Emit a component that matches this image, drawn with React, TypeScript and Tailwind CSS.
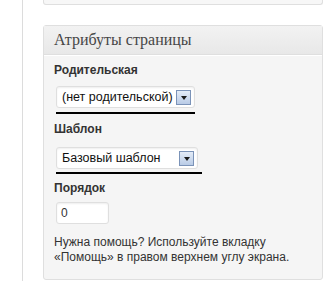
import React from "react";

const sans = "font-['Liberation_Sans',Arial,sans-serif]";

function Arrow() {
  return (
    <span className="flex h-[15px] w-[15px] shrink-0 items-center justify-center border border-[#7b93b8] bg-gradient-to-b from-[#e4ecf7] to-[#b9cbe6]">
      <span className="mt-[1px] h-0 w-0 border-x-[3px] border-t-[4px] border-x-transparent border-t-[#1a1a1a]" />
    </span>
  );
}

function FakeSelect({ label, width }: { label: string; width: string }) {
  return (
    <div className={`flex h-[22px] items-center justify-between gap-[2px] rounded-[3px] border border-[#dfdfdf] bg-white pl-[5px] pr-[3px] shadow-[inset_0_1px_2px_rgba(0,0,0,0.07)] ${width}`}>
      <span className="whitespace-nowrap text-[12.5px] leading-none text-[#111]">{label}</span>
      <Arrow />
    </div>
  );
}

export default function App() {
  return (
    <div className={`h-[281px] w-[333px] overflow-hidden bg-white ${sans}`}>
      <div className="ml-[22px] h-full border-l border-[#dcdcdc] pl-[20px]">
        {/* tail of the panel above */}
        <div className="h-[5px] w-[280px] rounded-b-[3px] border-x border-b border-[#dfdfdf] bg-[#f7f7f7]" />

        <div className="mt-[20px] w-[280px] rounded-[3px] border border-[#dfdfdf] bg-[#f5f5f5]">
          <div className="flex h-[29px] items-center border-b border-[#dfdfdf] bg-gradient-to-b from-[#f2f2f2] to-[#e8e8e8] pl-[10px] shadow-[0_1px_0_#fff]">
            <h3 className="whitespace-nowrap font-['Liberation_Serif',Georgia,serif] text-[16px] text-[#464646]">
              Атрибуты страницы
            </h3>
          </div>

          <div className="pb-[14px] pl-[10px] pt-[7px]">
            <p className="text-[12px] font-bold leading-[16px] text-[#333]">Родительская</p>
            <div className="ml-[2px] mt-[8px] w-fit">
              <FakeSelect label="(нет родительской)" width="w-[139px]" />
              <div className="mt-[4px] h-[2px] w-[139px] bg-black" />
            </div>

            <p className="mt-[7px] text-[12px] font-bold leading-[16px] text-[#333]">Шаблон</p>
            <div className="ml-[2px] mt-[10px] w-fit">
              <FakeSelect label="Базовый шаблон" width="w-[142px]" />
              <div className="mt-[3px] h-[2px] w-[146px] bg-black" />
            </div>

            <p className="mt-[6px] text-[12px] font-bold leading-[16px] text-[#333]">Порядок</p>
            <div className="ml-[2px] mt-[6px] flex h-[22px] w-[53px] items-center rounded-[3px] border border-[#dfdfdf] bg-white pl-[4px] text-[12px] text-[#333] shadow-[inset_0_1px_2px_rgba(0,0,0,0.07)]">
              0
            </div>

            <p className="mt-[11px] whitespace-nowrap text-[12px] leading-[15px] text-[#333]">
              Нужна помощь? Используйте вкладку
              <br />
              «Помощь» в правом верхнем углу экрана.
            </p>
          </div>
        </div>
      </div>
    </div>
  );
}
